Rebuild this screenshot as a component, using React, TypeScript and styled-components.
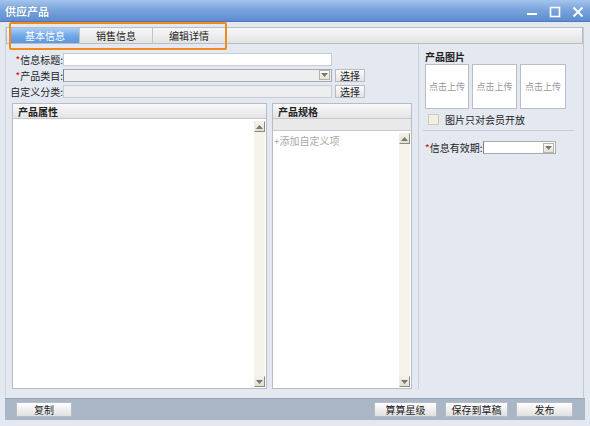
import React, { FC } from "react";
import styled, { createGlobalStyle } from "styled-components";

const GlobalStyle = createGlobalStyle`
  html, body {
    margin: 0;
    padding: 0;
    background: #e4e9f1;
  }
  body {
    font-family: "Noto Sans CJK SC", "Liberation Sans", sans-serif;
    font-size: 11px;
    color: #222;
  }
`;

const TitleIcon: FC<{ kind: "min" | "max" | "close" }> = ({ kind }) => (
  <svg width="12" height="12" viewBox="0 0 12 12">
    {kind === "min" && <rect x="1" y="7" width="10" height="2" fill="#fff" />}
    {kind === "max" && (
      <rect x="1.5" y="1.5" width="9" height="9" fill="none" stroke="#fff" strokeWidth="1.6" />
    )}
    {kind === "close" && (
      <path d="M1.5 1.5 L10.5 10.5 M10.5 1.5 L1.5 10.5" stroke="#fff" strokeWidth="1.8" />
    )}
  </svg>
);

const Arrow: FC<{ up?: boolean }> = ({ up }) => (
  <svg width="7" height="4" viewBox="0 0 7 4">
    <path d={up ? "M0 4 L3.5 0 L7 4 Z" : "M0 0 L7 0 L3.5 4 Z"} fill="#777" />
  </svg>
);

const App: FC = () => {
  return (
    <Window>
      <GlobalStyle />
      <TitleBar>
        <TitleText>供应产品</TitleText>
        <Controls>
          <TitleIcon kind="min" />
          <TitleIcon kind="max" />
          <TitleIcon kind="close" />
        </Controls>
      </TitleBar>

      <Body>
        <Frame>
          <TabBar>
            <Tab active width={68}>基本信息</Tab>
            <Tab width={72}>销售信息</Tab>
            <Tab width={72}>编辑详情</Tab>
            <TabHighlight />
          </TabBar>

          <Content>
            <LeftPane>
              <FormRow>
                <Label>
                  <Star>*</Star>信息标题:
                </Label>
                <TextInput />
              </FormRow>
              <FormRow>
                <Label>
                  <Star>*</Star>产品类目:
                </Label>
                <SelectBox>
                  <DropBtn>
                    <Arrow />
                  </DropBtn>
                </SelectBox>
                <SmallButton>选择</SmallButton>
              </FormRow>
              <FormRow>
                <Label>自定义分类:</Label>
                <TextInput disabled />
                <SmallButton>选择</SmallButton>
              </FormRow>

              <Panels>
                <Panel width={255}>
                  <PanelHeader>产品属性</PanelHeader>
                  <PanelBody>
                    <ListArea />
                    <ScrollBar>
                      <ScrollBtn>
                        <Arrow up />
                      </ScrollBtn>
                      <ScrollBtn>
                        <Arrow />
                      </ScrollBtn>
                    </ScrollBar>
                  </PanelBody>
                </Panel>
                <Panel width={140}>
                  <PanelHeader>产品规格</PanelHeader>
                  <SubHeader />
                  <PanelBody>
                    <ListArea>
                      <AddItem>+添加自定义项</AddItem>
                    </ListArea>
                    <ScrollBar>
                      <ScrollBtn>
                        <Arrow up />
                      </ScrollBtn>
                      <ScrollBtn>
                        <Arrow />
                      </ScrollBtn>
                    </ScrollBar>
                  </PanelBody>
                </Panel>
              </Panels>
            </LeftPane>

            <RightPane>
              <SectionTitle>产品图片</SectionTitle>
              <Uploads>
                <UploadBox width={44}>点击上传</UploadBox>
                <UploadBox width={45}>点击上传</UploadBox>
                <UploadBox width={46}>点击上传</UploadBox>
              </Uploads>
              <CheckRow>
                <CheckBox />
                图片只对会员开放
              </CheckRow>
              <Divider />
              <ValidRow>
                <span>
                  <Star>*</Star>信息有效期:
                </span>
                <SelectBox width={73}>
                  <DropBtn>
                    <Arrow />
                  </DropBtn>
                </SelectBox>
              </ValidRow>
            </RightPane>
          </Content>
        </Frame>
      </Body>

      <Footer>
        <FootButton width={56}>复制</FootButton>
        <FootRight>
          <FootButton width={63}>算算星级</FootButton>
          <FootButton width={63}>保存到草稿</FootButton>
          <FootButton width={57}>发布</FootButton>
        </FootRight>
      </Footer>
    </Window>
  );
};

const Window = styled.div`
  width: 590px;
  height: 426px;
  display: flex;
  flex-direction: column;
  background: #e4e9f1;
  overflow: hidden;
`;

const TitleBar = styled.div`
  height: 22px;
  display: flex;
  align-items: center;
  justify-content: space-between;
  padding: 0 6px 0 5px;
  background: linear-gradient(#a5c4ec, #7aa5dd 45%, #5d8cd0);
  border-bottom: 1px solid #4f79b6;
  box-sizing: border-box;
`;

const TitleText = styled.div`
  color: #fff;
  font-weight: bold;
  font-size: 11px;
  padding-top: 1px;
  text-shadow: 0 0 1px #3b64a3;
`;

const Controls = styled.div`
  display: flex;
  gap: 11px;
  align-items: center;
  padding-top: 2px;
`;

const Body = styled.div`
  flex: 1;
  padding: 5px 6px 0 5px;
  display: flex;
`;

const Frame = styled.div`
  flex: 1;
  display: flex;
  flex-direction: column;
  border-left: 1px solid #cdd4de;
  border-right: 1px solid #c2c9d3;
`;

const TabBar = styled.div`
  position: relative;
  height: 17px;
  display: flex;
  padding-left: 4px;
  background: linear-gradient(#f7f7f7, #e3e3e3);
  border: 1px solid #b9bec6;
  box-sizing: border-box;
`;

const Tab = styled.div<{ active?: boolean; width: number }>`
  width: ${(p) => p.width}px;
  display: flex;
  align-items: center;
  justify-content: center;
  font-size: 10px;
  color: ${(p) => (p.active ? "#fff" : "#222")};
  background: ${(p) =>
    p.active ? "linear-gradient(#a9cdf5, #6fa6e6 55%, #5e97de)" : "transparent"};
  border-right: 1px solid #c4c4c4;
`;

const TabHighlight = styled.div`
  position: absolute;
  left: 2px;
  top: -6px;
  width: 214px;
  height: 24px;
  border: 2px solid #f28a1a;
  border-radius: 2px;
  pointer-events: none;
`;

const Content = styled.div`
  flex: 1;
  display: flex;
`;

const LeftPane = styled.div`
  width: 412px;
  display: flex;
  flex-direction: column;
  padding-top: 8px;
`;

const FormRow = styled.div`
  display: flex;
  align-items: center;
  height: 14px;
  margin-bottom: 2px;
`;

const Label = styled.div`
  width: 57px;
  text-align: right;
  font-size: 10px;
  color: #222;
  white-space: nowrap;
`;

const Star = styled.span`
  color: #d20000;
`;

const TextInput = styled.input`
  width: 269px;
  height: 13px;
  box-sizing: border-box;
  margin: 0;
  padding: 0;
  border: 1px solid #c7ccd3;
  background: #fff;
  &:disabled {
    background: #eceeef;
  }
`;

const SelectBox = styled.div<{ width?: number }>`
  width: ${(p) => p.width ?? 269}px;
  height: 13px;
  box-sizing: border-box;
  border: 1px solid #a7acb3;
  border-left-color: #7d828a;
  background: ${(p) => (p.width ? "#fff" : "#eceeef")};
  display: flex;
  justify-content: flex-end;
  align-items: center;
  padding-right: 1px;
`;

const DropBtn = styled.div`
  width: 11px;
  height: 10px;
  display: flex;
  align-items: center;
  justify-content: center;
  background: linear-gradient(#fbfbf8, #e3e1d8);
  border: 1px solid #b6b3a8;
  box-sizing: border-box;
`;

const SmallButton = styled.div`
  margin-left: 3px;
  width: 30px;
  height: 13px;
  box-sizing: border-box;
  display: flex;
  align-items: center;
  justify-content: center;
  font-size: 10px;
  background: linear-gradient(#fdfdfd, #e2e2e2);
  border: 1px solid #b9bcc1;
`;

const Panels = styled.div`
  display: flex;
  gap: 5px;
  margin: 3px 0 0 6px;
  height: 286px;
`;

const Panel = styled.div<{ width: number }>`
  width: ${(p) => p.width}px;
  display: flex;
  flex-direction: column;
  border: 1px solid #b6bdc7;
  box-sizing: border-box;
  background: #fff;
`;

const PanelHeader = styled.div`
  height: 14px;
  flex-shrink: 0;
  display: flex;
  align-items: center;
  padding-left: 5px;
  font-size: 10px;
  font-weight: bold;
  background: linear-gradient(#f8f8f8, #e4e4e4);
  border-bottom: 1px solid #c4c8ce;
`;

const SubHeader = styled.div`
  height: 11px;
  flex-shrink: 0;
  background: #e9e9e9;
  border-bottom: 1px solid #c8ccd2;
`;

const PanelBody = styled.div`
  flex: 1;
  display: flex;
  padding-right: 1px;
`;

const ListArea = styled.div`
  flex: 1;
`;

const AddItem = styled.div`
  padding: 2px 0 0 1px;
  font-size: 10px;
  color: #a8a8a8;
`;

const ScrollBar = styled.div`
  width: 11px;
  margin: 2px 0 1px;
  display: flex;
  flex-direction: column;
  justify-content: space-between;
  background: #f5f3ea;
`;

const ScrollBtn = styled.div`
  height: 11px;
  display: flex;
  align-items: center;
  justify-content: center;
  background: linear-gradient(#f4f2e8, #e2dfd2);
  border: 1px solid #efede4;
  border-right-color: #8d8a80;
  border-bottom-color: #8d8a80;
  box-sizing: border-box;
`;

const RightPane = styled.div`
  flex: 1;
  border-left: 1px solid #c9cfd8;
  padding: 7px 5px 0 6px;
  display: flex;
  flex-direction: column;
  margin-bottom: 8px;
`;

const SectionTitle = styled.div`
  font-weight: bold;
  font-size: 10px;
  height: 13px;
  line-height: 11px;
`;

const Uploads = styled.div`
  display: flex;
  gap: 3px;
`;

const UploadBox = styled.div<{ width: number }>`
  width: ${(p) => p.width}px;
  height: 45px;
  box-sizing: border-box;
  background: #fff;
  border: 1px solid #b8bec7;
  display: flex;
  align-items: center;
  justify-content: center;
  font-size: 9px;
  color: #999;
`;

const CheckRow = styled.div`
  display: flex;
  align-items: center;
  gap: 6px;
  margin: 5px 0 0 3px;
  font-size: 10px;
  height: 11px;
`;

const CheckBox = styled.div`
  width: 9px;
  height: 9px;
  background: #f1efe4;
  border: 1px solid #cfcab7;
`;

const Divider = styled.div`
  height: 1px;
  background: #c9ced6;
  margin: 5px 4px 0 -2px;
`;

const ValidRow = styled.div`
  display: flex;
  align-items: center;
  margin-top: 9px;
  font-size: 10px;
  gap: 1px;
`;

const Footer = styled.div`
  height: 22px;
  margin: 1px 5px 6px 5px;
  padding: 0 12px 0 11px;
  display: flex;
  align-items: center;
  justify-content: space-between;
  background: #a9b6c5;
  border-top: 1px solid #97a4b3;
  box-sizing: border-box;
`;

const FootRight = styled.div`
  display: flex;
  gap: 8px;
`;

const FootButton = styled.div<{ width: number }>`
  width: ${(p) => p.width}px;
  height: 15px;
  box-sizing: border-box;
  display: flex;
  align-items: center;
  justify-content: center;
  font-size: 10px;
  background: linear-gradient(#fefefe, #e0e0e0);
  border: 1px solid #b5bcc5;
`;

export default App;
